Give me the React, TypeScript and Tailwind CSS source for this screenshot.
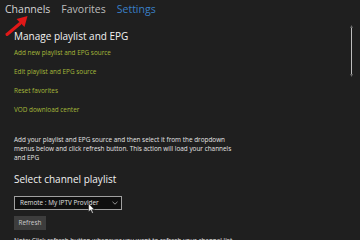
import React from "react";

export default function App() {
  const font = { fontFamily: '"Open Sans", "Noto Sans", sans-serif' };
  return (
    <div className="relative w-[360px] h-[240px] overflow-hidden bg-[#1f1f1f] text-[#e4e4e4]" style={font}>
      <div className="flex gap-[11px] pl-[5px] pt-[2px] text-[10.5px] leading-[14px]">
        <span className="text-[#d4d4d4]">Channels</span>
        <span className="text-[#bcbcbc]">Favorites</span>
        <span className="text-[#3a7fc6]">Settings</span>
      </div>
      <div className="pl-[14px] pr-[10px]">
        <div className="mt-[13px] text-[10px] leading-[14px] text-[#f2f2f2]">Manage playlist and EPG</div>
        <div className="flex flex-col text-[6.4px] leading-[19px] text-[#a5b93a]">
          <span>Add new playlist and EPG source</span>
          <span>Edit playlist and EPG source</span>
          <span>Reset favorites</span>
          <span>VOD download center</span>
        </div>
        <p className="mt-[16px] text-[6.4px] leading-[9px] whitespace-nowrap text-[#e4e4e4]">
          Add your playlist and EPG source and then select it from the dropdown
          <br />
          menus below and click refresh button. This action will load your channels
          <br />
          and EPG
        </p>
        <div className="mt-[10px] text-[10px] leading-[14px] text-[#f2f2f2]">Select channel playlist</div>
        <div className="mt-[10px] relative flex items-center justify-between w-[108px] h-[14px] border border-[#a0a0a0] bg-[#0f0f0f] pl-[5px] pr-[3px] text-[6.4px] text-[#e0e0e0]">
          <span>Remote : My IPTV Provider</span>
          <svg width="6" height="4" viewBox="0 0 6 4">
            <path d="M0.5 0.8 L3 3.2 L5.5 0.8" stroke="#cfcfcf" strokeWidth="0.7" fill="none" />
          </svg>
          <svg width="7" height="11" viewBox="0 0 7 11" className="absolute left-[73px] top-[6px]">
            <path d="M0.6 0.6 L0.6 8.8 L2.6 7 L4.2 10.3 L5.3 9.8 L3.8 6.6 L6.3 6.6 Z" fill="#ffffff" stroke="#111" strokeWidth="0.5" />
          </svg>
        </div>
        <div className="mt-[6px] w-[32px] h-[14px] flex items-center justify-center bg-[#3d3d3d] text-[6.4px] text-[#cccccc]">Refresh</div>
        <p className="mt-[6px] text-[6.4px] leading-[9px] whitespace-nowrap text-[#e4e4e4]">
          Note: Click refresh button whenever you want to refresh your channel list
        </p>
      </div>
      <svg className="absolute left-[3px] top-[14px]" width="28" height="24" viewBox="0 0 28 24">
        <path d="M4 20.5 L17 9.5" stroke="#e01818" strokeWidth="3" strokeLinecap="round" />
        <path d="M13.5 5 L24.5 2 L21.5 13 Z" fill="#e01818" />
      </svg>
      <div className="absolute left-[350px] top-[25px] w-[3px] h-[52px] flex flex-col items-center">
        <svg width="3" height="3" viewBox="0 0 3 3"><path d="M0 3 L1.5 0 L3 3" fill="#6a6a6a" /></svg>
        <div className="w-[1px] flex-1 bg-[#bdbdbd]" />
        <svg width="3" height="3" viewBox="0 0 3 3"><path d="M0 0 L1.5 3 L3 0" fill="#6a6a6a" /></svg>
      </div>
    </div>
  );
}
